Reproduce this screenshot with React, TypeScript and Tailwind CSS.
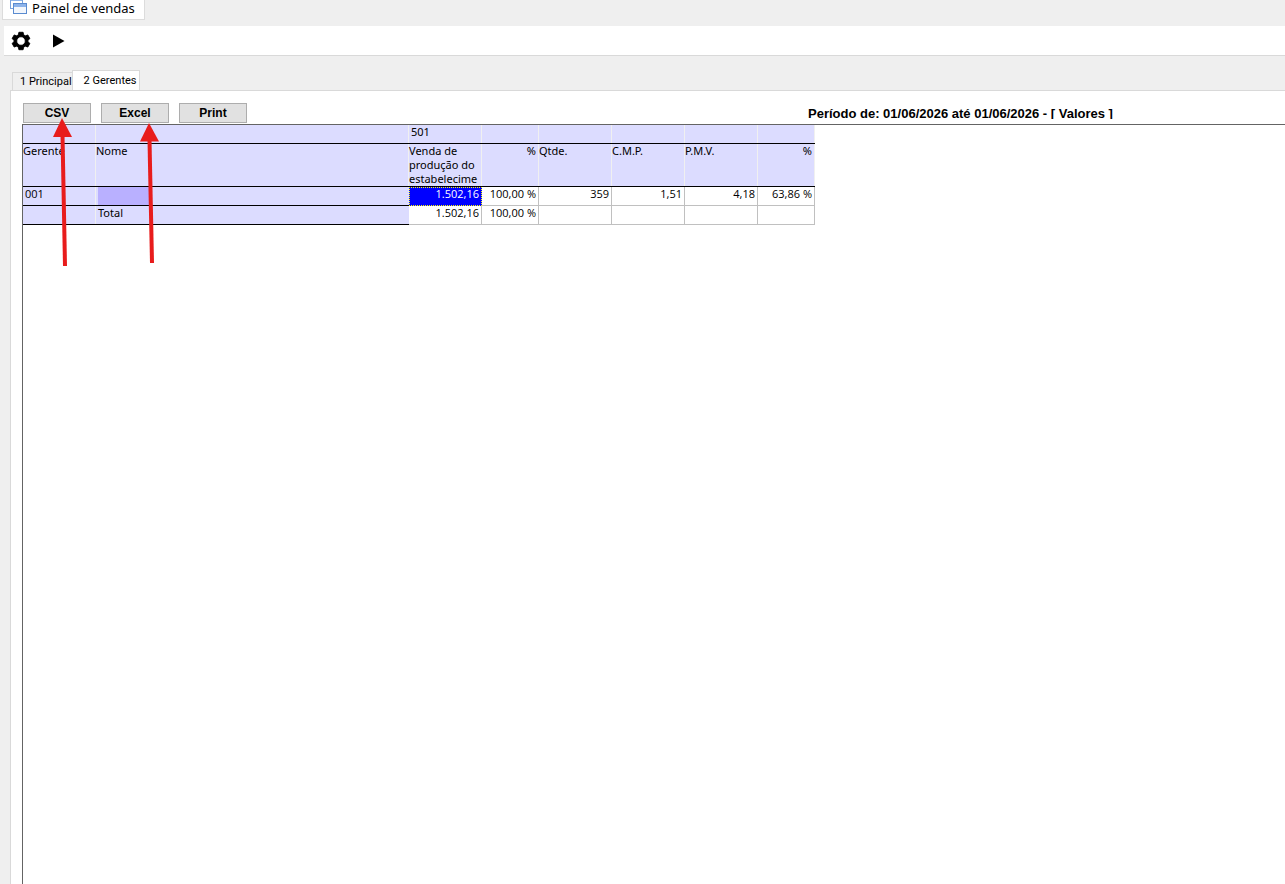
import React, { useState } from 'react'

const App = () => {
  const tabs = ['1 Principal', '2 Gerentes']
  const exportButtons = ['CSV', 'Excel', 'Print']
  const [activeTab, setActiveTab] = useState(1)

  const totals = ['1.502,16', '100,00 %', '', '', '', '']

  const headCell = "p-0 border-b border-black bg-[#dcdcff] shadow-[inset_-1px_0_0_#f0f0f0] font-['Noto_Sans',sans-serif] font-normal align-top"
  const fixedCell = 'py-0 px-0.5 border-b border-black bg-[#dcdcff] shadow-[inset_-1px_0_0_#f0f0f0] font-normal text-left align-top'
  const lastFixedCell = "py-0 px-0.5 border-b border-black bg-[#dcdcff] font-['Noto_Sans',sans-serif] font-normal text-left align-top"
  const dataCell = 'py-0 px-0.5 border-r border-b border-[#c0c0c0] bg-white text-right align-top'

  return (
    <div className="flex flex-col min-h-screen bg-[#efefef] text-black overflow-hidden">
      <header className="flex h-5 pl-0.5">
        <div className="flex items-center h-5 pl-[7px] pr-[9px] pb-1 gap-[5px] bg-white border-x border-b border-[#dcdcdc]">
          <WindowsIcon />
          <h1 className="font-['Noto_Sans',sans-serif] text-[13px] leading-4 whitespace-nowrap">
            Painel de vendas
          </h1>
        </div>
      </header>

      <div className="flex items-center mt-1.5 ml-1 pl-1.5 h-[30px] gap-[18px] bg-white border-b border-[#d9d9d9]">
        <button aria-label="Configurações">
          <GearIcon />
        </button>
        <button aria-label="Executar">
          <svg width="16" height="16" viewBox="0 0 16 16">
            <path d="M3 1.500v13L14.500 8z" fill="#000" />
          </svg>
        </button>
      </div>

      <div role="tablist" className="flex items-end h-[34px] pl-3 font-['Roboto','Liberation_Sans',sans-serif] text-[11px] leading-4">
        {tabs.map((tab, index) => (
          <button
            key={tab}
            role="tab"
            aria-selected={activeTab === index}
            onClick={() => setActiveTab(index)}
            className={
              activeTab === index
                ? 'h-[21px] -mb-px pl-[11px] pr-0.5 bg-white border-x border-t border-[#d9d9d9] whitespace-nowrap'
                : 'h-[18px] pl-[7px] bg-[#efefef] border-l border-t border-[#d9d9d9] whitespace-nowrap'
            }
          >
            {tab}
          </button>
        ))}
      </div>

      <main className="flex flex-col flex-1 ml-2.5 pl-[11px] bg-white border-l border-t border-[#d9d9d9]">
        <div className="flex items-start h-[33px] pt-3 font-['Liberation_Sans',sans-serif] font-bold">
          <div className="flex gap-2.5 pl-px">
            {exportButtons.map((label) => (
              <button
                key={label}
                className="w-[68px] h-5 bg-[#e1e1e1] border border-[#adadad] text-[12px] leading-4 hover:bg-[#e5f1fb]"
              >
                {label}
              </button>
            ))}
          </div>
          <p className="ml-[561px] mt-1 h-3 overflow-hidden text-[13px] leading-[14px] whitespace-nowrap">
            Período de: 01/06/2026 até 01/06/2026 - [ Valores ]
          </p>
        </div>

        <section className="relative flex-1 border-l border-t border-[#646464]">
          <table className="table-fixed w-[792px] border-separate border-spacing-0 font-['Open_Sans','Noto_Sans',sans-serif] text-[11px] leading-[14px]">
            <colgroup>
              <col className="w-[73px]" />
              <col className="w-[313px]" />
              <col className="w-[73px]" />
              <col className="w-[57px]" />
              <col className="w-[73px]" />
              <col className="w-[73px]" />
              <col className="w-[73px]" />
              <col className="w-[57px]" />
            </colgroup>
            <thead>
              <tr className="h-[19px]">
                <th className={headCell}></th>
                <th className={headCell}></th>
                <th className={`${headCell} pl-0.5 text-left`}>501</th>
                <th className={headCell}></th>
                <th className={headCell}></th>
                <th className={headCell}></th>
                <th className={headCell}></th>
                <th className={headCell}></th>
              </tr>
              <tr className="h-[43px]">
                <th className={`${headCell} text-left`}>Gerente</th>
                <th className={`${headCell} text-left`}>Nome</th>
                <th className={`${headCell} text-left`}>
                  Venda de produção do estabelecime
                </th>
                <th className={`${headCell} pr-[3px] text-right`}>%</th>
                <th className={`${headCell} text-left`}>Qtde.</th>
                <th className={`${headCell} text-left`}>C.M.P.</th>
                <th className={`${headCell} text-left`}>P.M.V.</th>
                <th className={`${headCell} pr-[3px] text-right`}>%</th>
              </tr>
            </thead>
            <tbody>
              <tr className="h-[19px]">
                <th className={fixedCell}>001</th>
                <th className={lastFixedCell}>
                  <div className="w-[53px] h-[18px] bg-[#b9b0ff]"></div>
                </th>
                <td className="p-0 bg-[#0000ff] text-white text-right align-top">
                  <div className="h-[19px] pr-0.5 border border-dotted border-[#ffff00] leading-3">1.502,16</div>
                </td>
                <td className={dataCell}>100,00 %</td>
                <td className={dataCell}>359</td>
                <td className={dataCell}>1,51</td>
                <td className={dataCell}>4,18</td>
                <td className={dataCell}>63,86 %</td>
              </tr>
              <tr className="h-[19px]">
                <th className={fixedCell}></th>
                <th className={lastFixedCell}>Total</th>
                {totals.map((value, index) => (
                  <td key={index} className={dataCell}>
                    {value}
                  </td>
                ))}
              </tr>
            </tbody>
          </table>

          {/* setas sobre os botões CSV e Excel */}
          <svg
            className="absolute -left-px -top-[5px] pointer-events-none overflow-visible"
            width="150"
            height="150"
            viewBox="22 120 150 150"
            fill="#e81c1c"
          >
            <path d="M62 118 L72 137 H53 Z" />
            <path d="M62.5 135 L65 266" stroke="#e81c1c" strokeWidth="4" />
            <path d="M149 123 L159 141.500 H140 Z" />
            <path d="M149.500 140 L152 263" stroke="#e81c1c" strokeWidth="4" />
          </svg>
        </section>
      </main>
    </div>
  )
}

const WindowsIcon = () => (
  <svg width="17" height="17" viewBox="0 0 17 17" className="shrink-0">
    <rect x="0.5" y="-0.5" width="12" height="10" fill="#fff" stroke="#7ba3dc" />
    <rect x="1" y="0" width="11" height="2" fill="#8fb4ea" />
    <rect x="3.5" y="4.500" width="13" height="10" fill="#f2f6fc" stroke="#5a8bd0" />
    <rect x="4" y="5" width="12" height="3" fill="#8db3ea" />
  </svg>
)

const GearIcon = () => (
  <svg width="22" height="22" viewBox="0 0 24 24" fill="#000" stroke="#000" strokeLinejoin="round">
    <path
      fillRule="evenodd"
      d="M9.700 2.500h4.600l.5 2.700 2 1.200 2.600-1 2.300 4-2.100 1.700v1.800l2.100 1.700-2.300 4-2.600-1-2 1.200-.5 2.700H9.700l-.5-2.700-2-1.200-2.600 1-2.300-4 2.100-1.700v-1.800L2.300 9.400l2.300-4 2.600 1 2-1.200zM12 7.300a4.700 4.700 0 1 0 0 9.400 4.700 4.700 0 0 0 0-9.400z"
    />
  </svg>
)

export default App
